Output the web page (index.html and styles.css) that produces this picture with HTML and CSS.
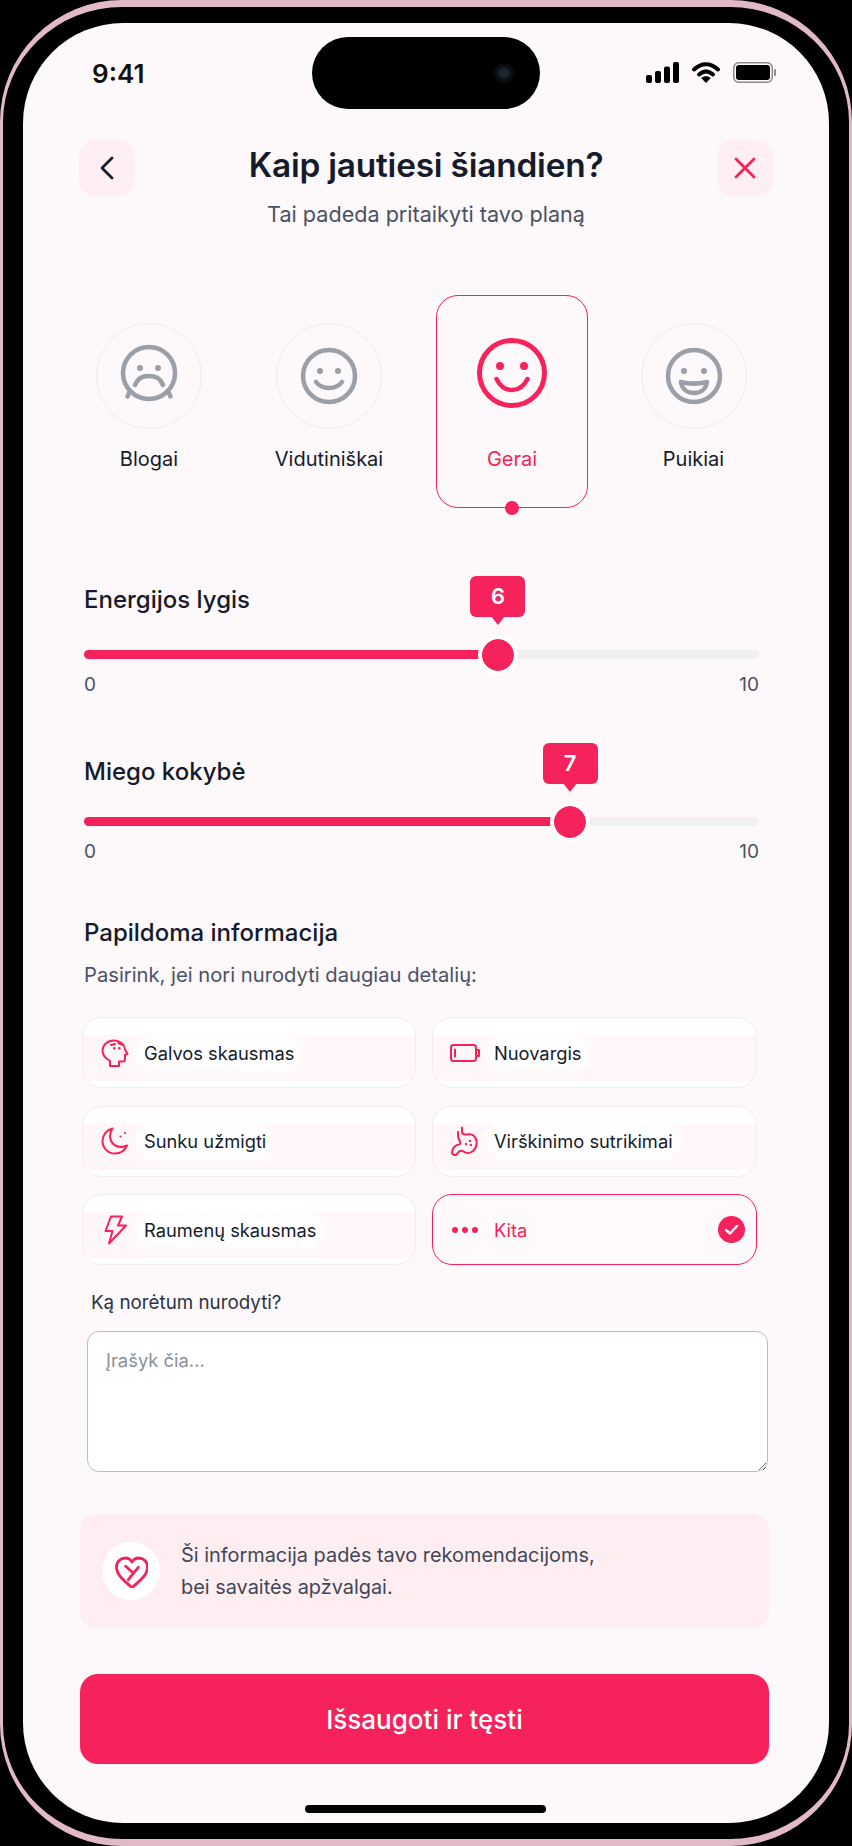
FILE: index.html
```html
<!DOCTYPE html>
<html lang="lt">
<head>
<meta charset="utf-8">
<title>Kaip jautiesi šiandien?</title>
<link rel="stylesheet" href="styles.css">
</head>
<body>
<div class="phone">
  <main class="screen">
    <div class="status">
      <span class="time">9:41</span>
      <div class="island"><span class="camera"></span></div>
      <div class="status-icons">
        <svg width="33" height="21" viewBox="0 0 33 21"><rect x="0" y="13" width="6" height="8" rx="2"/><rect x="9" y="9" width="6" height="12" rx="2"/><rect x="18" y="4.500" width="6" height="16.500" rx="2"/><rect x="27" y="0" width="6" height="21" rx="2"/></svg>
        <svg width="28" height="21" viewBox="0 0 28 21"><path class="wifi" d="M2 7.500C9.500 .5 18.500 .5 26 7.500"/><path class="wifi" d="M7 12.500C11.500 8.500 16.500 8.500 21 12.500"/><path d="M14 21l-4.800-5c3-2.500 6.600-2.500 9.600 0z"/></svg>
        <svg width="43" height="21" viewBox="0 0 43 21"><rect class="batt-edge" x=".75" y=".75" width="38.500" height="19.500" rx="5"/><rect x="3" y="3" width="34" height="15" rx="3"/><rect class="batt-nub" x="41" y="7" width="2" height="7" rx="1"/></svg>
      </div>
    </div>

    <header class="top">
      <button class="icon-btn"><svg width="14" height="24" viewBox="0 0 14 24"><path class="chev" d="M12 2 2 12l10 10"/></svg></button>
      <div class="titles">
        <h1>Kaip jautiesi šiandien?</h1>
        <p>Tai padeda pritaikyti tavo planą</p>
      </div>
      <button class="icon-btn"><svg width="22" height="22" viewBox="0 0 22 22"><path class="cross" d="M2 2l18 18M20 2 2 20"/></svg></button>
    </header>

    <section class="moods">
      <div class="mood mood-shift">
        <div class="mood-ring"><svg width="60" height="64" viewBox="0 0 60 64"><g class="face"><circle cx="30" cy="29" r="26"/><path d="M16 41c3-7 7-9 14-9s11 2 14 9"/><path d="M11 47l-2.500 5.500M49 47l2.500 5.500"/></g><circle class="eye" cx="21" cy="24" r="3"/><circle class="eye" cx="39" cy="24" r="3"/></svg></div>
        <span>Blogai</span>
      </div>
      <div class="mood mood-shift2">
        <div class="mood-ring"><svg width="60" height="60" viewBox="0 0 60 60"><g class="face"><circle cx="30" cy="30" r="26"/><path d="M17 36c3 4 8 6 13 6s10-2 13-6"/></g><circle class="eye" cx="21" cy="25" r="3"/><circle class="eye" cx="39" cy="25" r="3"/></svg></div>
        <span>Vidutiniškai</span>
      </div>
      <div class="mood mood-on">
        <div class="mood-big"><svg width="72" height="72" viewBox="0 0 72 72"><circle class="smile-ring" cx="36" cy="36" r="32.500"/><path class="smile-mouth" d="M20.500 42c3.500 7 9 11 15.500 11s12-4 15.500-11"/><circle class="smile-eye" cx="24" cy="29" r="4"/><circle class="smile-eye" cx="48" cy="29" r="4"/></svg></div>
        <span>Gerai</span>
        <i class="mood-dot"></i>
      </div>
      <div class="mood">
        <div class="mood-ring"><svg width="60" height="60" viewBox="0 0 60 60"><g class="face"><circle cx="30" cy="30" r="26"/><path d="M17 36c8 2 18 2 26 0-1 7-6 11-13 11s-12-4-13-11z"/></g><circle class="eye" cx="20" cy="25" r="3"/><circle class="eye" cx="40" cy="25" r="3"/></svg></div>
        <span>Puikiai</span>
      </div>
    </section>

    <section class="metric metric-energy">
      <h2>Energijos lygis</h2>
      <div class="track">
        <div class="fill" style="width:61.33%">
          <div class="thumb"><b class="bubble">6</b></div>
        </div>
      </div>
      <div class="ends"><span>0</span><span>10</span></div>
    </section>

    <section class="metric metric-sleep">
      <h2>Miego kokybė</h2>
      <div class="track">
        <div class="fill" style="width:72%">
          <div class="thumb"><b class="bubble">7</b></div>
        </div>
      </div>
      <div class="ends"><span>0</span><span>10</span></div>
    </section>

    <section class="extra">
      <h2>Papildoma informacija</h2>
      <p class="hint">Pasirink, jei nori nurodyti daugiau detalių:</p>
      <div class="chips">
        <div class="chip">
          <svg class="ico" width="28" height="28" viewBox="0 0 28 28"><path d="M9 27v-5C4.500 19.500 1.500 16 1.500 11.500 1.500 6 6.500 1.500 13 1.500c6 0 10.500 4 11 9l2.500 4.500-2.500 1v4c0 1.500-1 2.500-2.500 2.500H18v4.500z"/><path d="M10 6l4-1M17.300 4l3.400 1.700"/><circle class="ico-dot" cx="13.300" cy="9.300" r="1.200"/><circle class="ico-dot" cx="18.300" cy="9.300" r="1.200"/></svg>
          <span class="chip-text">Galvos skausmas</span>
        </div>
        <div class="chip">
          <svg class="ico" width="30" height="18" viewBox="0 0 30 18"><rect x="1" y="1" width="25" height="16" rx="2.500"/><path d="M27 6h2v6h-2M5 5.500v7"/></svg>
          <span class="chip-text">Nuovargis</span>
        </div>
        <div class="chip">
          <svg class="ico" width="28" height="28" viewBox="0 0 28 28"><path d="M11.500 1.500C5.500 3 1.500 8 1.500 14c0 7 5.500 12.500 12.500 12.500 5.500 0 10-3.500 12-8-2 1-3.500 1.500-6 1.500-6.500 0-11-5-11-11 0-2.500.8-5.500 2.500-7.500z"/><circle class="ico-dot" cx="19.500" cy="9.500" r="1.100"/><circle class="ico-dot" cx="24" cy="6" r="1.100"/></svg>
          <span class="chip-text">Sunku užmigti</span>
        </div>
        <div class="chip">
          <svg class="ico" width="28" height="30" viewBox="0 0 28 30"><path d="M11 1.500v4c0 2.500 1.500 3 3 3 3 0 6.500-1 9 1.500 4 4 3.500 11-1 15-3 2.500-7 2.500-9.500.5-1.500-1-3-1-4.500 0l-2.500 3c-1 1-4.500 .5-4.500-2 0-4 3.500-8 7-8 1.500 0 1.500-1.500 1-3-.8-2-2-3-2-6v-3.500"/><circle class="ico-dot" cx="19" cy="15" r="1.200"/><circle class="ico-dot" cx="15" cy="18" r="1.200"/><circle class="ico-dot" cx="20" cy="19" r="1.200"/></svg>
          <span class="chip-text">Virškinimo sutrikimai</span>
        </div>
        <div class="chip">
          <svg class="ico" width="28" height="30" viewBox="0 0 28 30"><path d="M10 1.500h11l-4 9h8L8 28.500l3.500-12.500H4.500z"/></svg>
          <span class="chip-text">Raumenų skausmas</span>
        </div>
        <div class="chip chip-on">
          <svg class="ico" width="28" height="8" viewBox="0 0 28 8"><circle class="ico-dot" cx="4" cy="4" r="3"/><circle class="ico-dot" cx="14" cy="4" r="3"/><circle class="ico-dot" cx="24" cy="4" r="3"/></svg>
          <span class="chip-text">Kita</span>
          <svg class="check" width="27" height="27" viewBox="0 0 27 27"><circle cx="13.500" cy="13.500" r="13.500"/><path d="M8 14l4 3.500 7-7.500"/></svg>
        </div>
      </div>
      <label class="note-label" for="note">Ką norėtum nurodyti?</label>
      <textarea id="note" class="note" placeholder="Įrašyk čia..."></textarea>
    </section>

    <aside class="info">
      <div class="info-ico"><svg width="34" height="34" viewBox="-1 -2 34 34"><path class="heart" d="M17 31.500C8 24 1.500 18.500 1.500 11 1.500 5.500 5.500 2 10.500 2 13 2 15.500 3.500 17 6c1.500-2.500 4-4 6.500-4 5 0 9 3.500 9 9 0 7.500-6.500 13-15.500 20.500z"/><path class="heart" d="M10.700 10.300l6.600 6M23.300 11.300l-10 12.400"/></svg></div>
      <p>Ši informacija padės tavo rekomendacijoms,<br>bei savaitės apžvalgai.</p>
    </aside>

    <button class="save">Išsaugoti ir tęsti</button>
    <div class="home-bar"></div>
  </main>
</div>
</body>
</html>
```

FILE: styles.css
```css
* { box-sizing: border-box; }
html, body { margin: 0; padding: 0; background: #000; }
body {
  width: 852px;
  height: 1846px;
  overflow: hidden;
  font-family: "Inter", "Liberation Sans", sans-serif;
  color: #151b2b;
}
h1, h2, p { margin: 0; }

.phone {
  width: 852px;
  height: 1846px;
  padding: 16px 20px;
  border-style: solid;
  border-color: #e2b9c8;
  border-width: 7px 3px;
  border-radius: 122px;
  background: #000;
}
.screen {
  height: 100%;
  border-radius: 100px;
  background: #fdf8fa;
  overflow: hidden;
  display: flex;
  flex-direction: column;
}

.status {
  display: flex;
  align-items: center;
  justify-content: space-between;
  height: 72px;
  margin: 14px 53px 0 69px;
}
.time { font-size: 26px; font-weight: 600; color: #111; width: 60px; }
.island {
  width: 228px;
  height: 72px;
  margin-left: 54px;
  border-radius: 36px;
  background: #000;
  display: flex;
  align-items: center;
  justify-content: flex-end;
  padding-right: 26px;
}
.camera {
  width: 20px;
  height: 20px;
  border-radius: 50%;
  background: radial-gradient(circle, #1d2530 0 30%, #0c1016 45%, #040507 100%);
}
.status-icons { display: flex; align-items: center; gap: 13px; margin-top: -2px; }
.status-icons svg { fill: #000; display: block; }
.status-icons .wifi { fill: none; stroke: #000; stroke-width: 4; stroke-linecap: round; }
.status-icons .batt-edge { fill: #fdf8fa; stroke: #8a8a8e; stroke-width: 1.5; }
.status-icons .batt-nub { fill: #8a8a8e; }

.top {
  display: flex;
  justify-content: space-between;
  align-items: flex-start;
  margin: 31px 56px 0;
}
.icon-btn {
  width: 56px;
  height: 56px;
  padding: 0;
  border: 0;
  border-radius: 16px;
  background: #ffeff2;
  display: flex;
  align-items: center;
  justify-content: center;
}
.chev { fill: none; stroke: #151b2b; stroke-width: 2.800; stroke-linecap: round; stroke-linejoin: round; }
.cross { fill: none; stroke: #f5225c; stroke-width: 2.800; stroke-linecap: round; }
.titles { text-align: center; }
.titles h1 { font-size: 33.400px; line-height: 50px; font-weight: 600; letter-spacing: -.2px; }
.titles p { font-size: 21.600px; line-height: 26px; margin-top: 11px; color: #4a5263; }

.moods {
  display: flex;
  gap: 29.500px;
  margin: 68px 0 0 50px;
}
.mood {
  width: 152px;
  height: 213px;
  padding-top: 28px;
  display: flex;
  flex-direction: column;
  align-items: center;
  font-size: 20px;
  position: relative;
}
.mood span { margin-top: 17px; line-height: 26px; }
.mood-shift2 { margin-left: -1.500px; margin-right: 1.500px; }
.mood-ring, .mood-big {
  width: 106px;
  height: 106px;
  border-radius: 50%;
  display: flex;
  align-items: center;
  justify-content: center;
}
.mood-ring { border: 1px solid #eeeaec; }
.mood-ring svg { display: block; }
.mood-big svg { display: block; margin-top: -6px; }
.face { fill: none; stroke: #9a9fa8; stroke-width: 4.500; stroke-linecap: round; stroke-linejoin: round; }
.eye { fill: #9a9fa8; }
.mood-on {
  border: 1.500px solid #f5225c;
  border-radius: 22px;
  padding-top: 26.500px;
  color: #f5225c;
}
.smile-ring { fill: none; stroke: #f5225c; stroke-width: 5; }
.smile-mouth { fill: none; stroke: #f5225c; stroke-width: 4.500; stroke-linecap: round; }
.smile-eye { fill: #f5225c; }
.mood-dot {
  position: absolute;
  left: 50%;
  bottom: -7.500px;
  width: 14px;
  height: 14px;
  margin-left: -7px;
  border-radius: 50%;
  background: #f5225c;
}

.metric { margin: 0 70px 0 61px; }
.metric h2, .extra h2 { font-size: 24px; line-height: 30px; font-weight: 500; }
.metric-energy { margin-top: 77px; }
.metric-sleep { margin-top: 60px; }
.metric-energy .track { margin-top: 35px; }
.metric-sleep .track { margin-top: 30px; }
.track {
  height: 9px;
  border-radius: 5px;
  background: #f1f0f1;
}
.fill {
  position: relative;
  height: 100%;
  border-radius: 5px;
  background: #f5225c;
}
.thumb {
  position: absolute;
  right: -20px;
  top: -15.500px;
  width: 40px;
  height: 40px;
  border-radius: 50%;
  border: 4px solid #fff;
  background: #f5225c;
  background-clip: padding-box;
}
.bubble {
  position: absolute;
  left: 50%;
  bottom: 54px;
  width: 55px;
  height: 41px;
  margin-left: -27.500px;
  border-radius: 6px;
  background: #f5225c;
  color: #fff;
  font-size: 22px;
  font-weight: 600;
  line-height: 40px;
  text-align: center;
}
.bubble::after {
  content: "";
  position: absolute;
  left: 50%;
  top: 40px;
  margin-left: -7px;
  border: 7px solid transparent;
  border-bottom-width: 0;
  border-top: 9px solid #f5225c;
}
.ends {
  display: flex;
  justify-content: space-between;
  margin-top: 14px;
  font-size: 19px;
  line-height: 24px;
  color: #4a5263;
}

.extra { margin: 0 61px; padding-top: 53px; }
.extra h2 { line-height: 32px; }
.hint { font-size: 20.200px; line-height: 26px; margin-top: 13px; color: #4a5263; }
.chips {
  display: grid;
  grid-template-columns: 334px 325px;
  grid-auto-rows: 71px;
  column-gap: 16px;
  row-gap: 17.500px;
  margin: 29px 0 0 -2px;
}
.chip {
  display: flex;
  align-items: center;
  position: relative;
  padding-left: 61px;
  border: 1px solid #f1ecee;
  border-radius: 20px;
  font-size: 18.300px;
  background: linear-gradient(#fff 0 24%, #fff6f8 24% 92%, #fff 92%);
}
.chip-text {
  border-radius: 10px;
  background: #fff;
  box-shadow: 0 0 12px 8px #fff;
}
.chip-on { border: 1.500px solid #f5225c; color: #f5225c; background: #fef9fa; }
.chip-on .chip-text { background: none; box-shadow: none; }
.ico {
  position: absolute;
  left: 32px;
  top: 50%;
  transform: translate(-50%, -50%);
  fill: none;
  stroke: #f5225c;
  stroke-width: 2;
  stroke-linecap: round;
  stroke-linejoin: round;
}
.ico-dot { fill: #f5225c; stroke: none; }
.check { position: absolute; right: 11px; top: 50%; margin-top: -13.500px; }
.check circle { fill: #f5225c; }
.check path { fill: none; stroke: #fff; stroke-width: 2.500; stroke-linecap: round; stroke-linejoin: round; }
.note-label {
  display: block;
  margin: 26px 0 0 7px;
  font-size: 18.800px;
  line-height: 24px;
  color: #2c3444;
}
.note {
  display: block;
  width: 681px;
  height: 141px;
  margin: 16px 0 0 3px;
  padding: 16px 18px;
  border: 1.500px solid #bdbcc2;
  border-radius: 12px;
  background: #fff;
  font: 18.400px/24px "Inter", "Liberation Sans", sans-serif;
  color: #151b2b;
  outline: 0;
}
.note::placeholder { color: #8b8f98; opacity: 1; }

.info {
  display: flex;
  align-items: center;
  gap: 21px;
  height: 114px;
  margin: 42px 60px 0 57px;
  padding-left: 22px;
  border-radius: 16px;
  background: #ffeef1;
}
.info-ico {
  width: 58px;
  height: 58px;
  border-radius: 50%;
  background: #fff;
  display: flex;
  align-items: center;
  justify-content: center;
}
.heart { fill: none; stroke: #f5225c; stroke-width: 2.800; stroke-linecap: round; stroke-linejoin: round; }
.info p { font-size: 19.900px; line-height: 32px; color: #3f4757; }

.save {
  height: 90px;
  margin: 46px 60px 0 57px;
  border: 0;
  border-radius: 18px;
  background: #f5225c;
  color: #fff;
  font: 500 26px "Inter", "Liberation Sans", sans-serif;
}
.home-bar {
  width: 241px;
  height: 8px;
  margin: 41px auto 0;
  border-radius: 4px;
  background: #000;
  position: relative;
  left: -1px;
}
```
